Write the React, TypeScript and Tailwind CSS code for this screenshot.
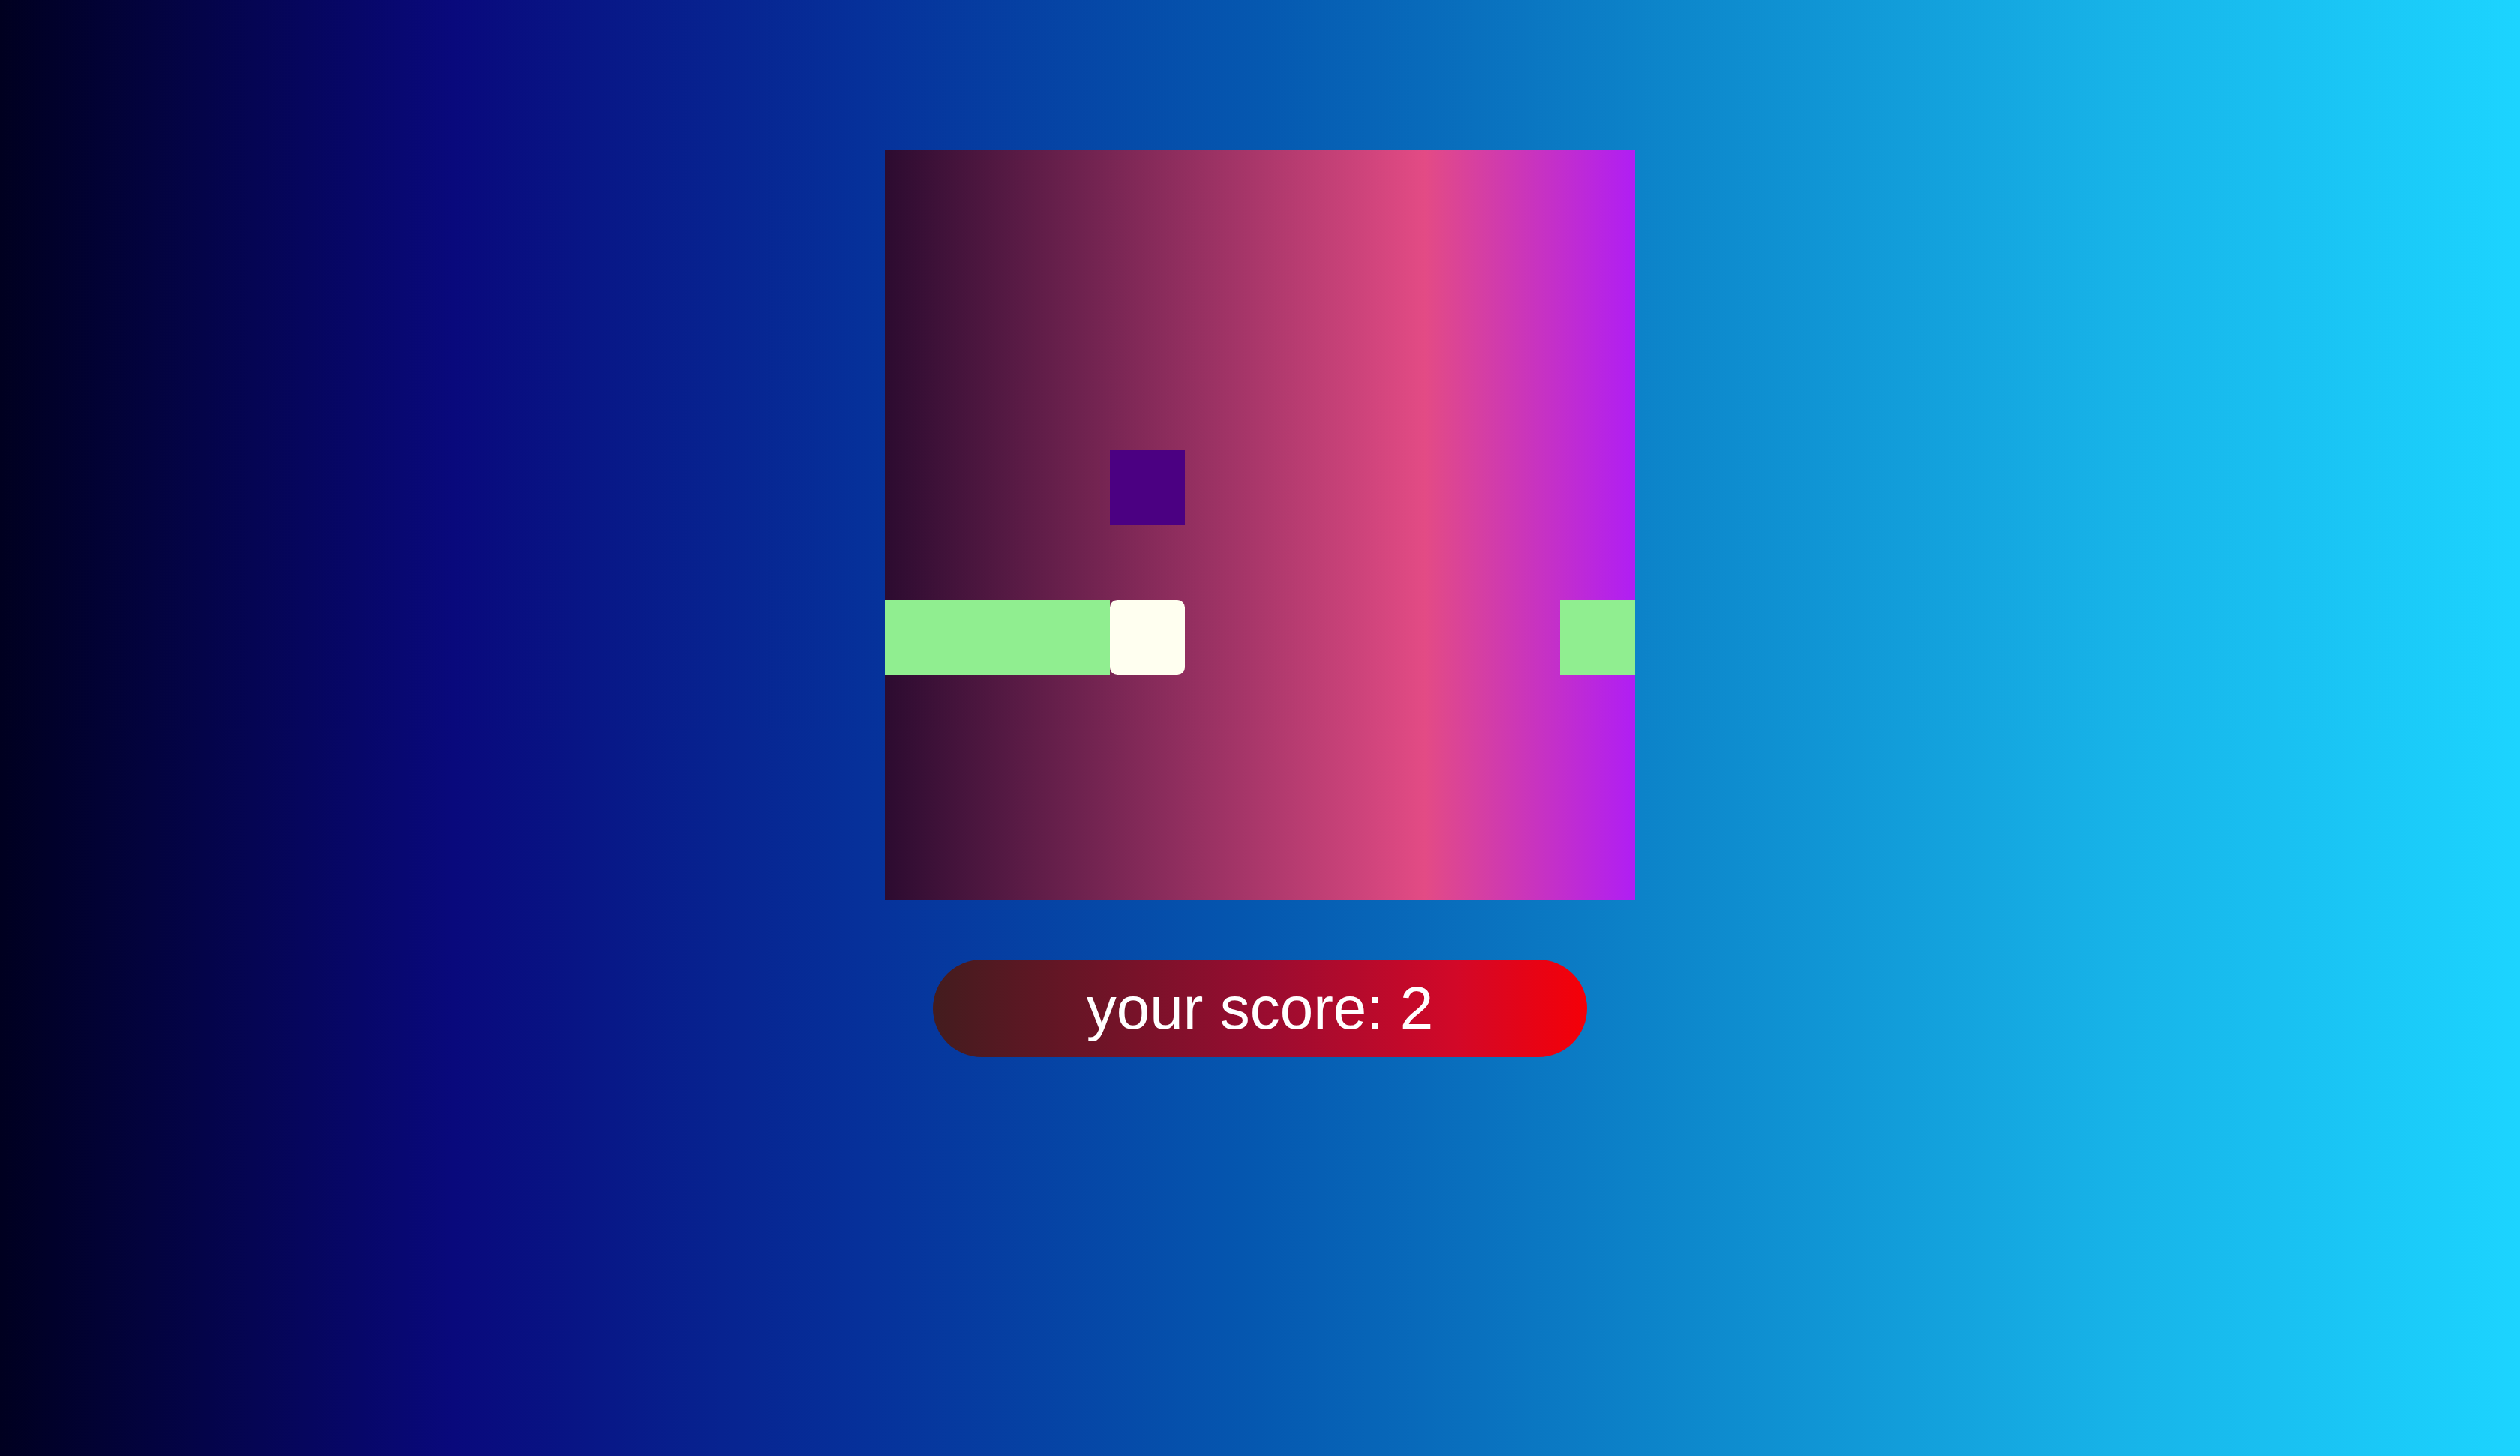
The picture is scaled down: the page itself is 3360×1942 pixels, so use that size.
type Cell = "empty" | "body" | "head" | "food";

const SIZE = 10;

const snake: [number, number][] = [
  [6, 3],
  [6, 2],
  [6, 1],
  [6, 0],
  [6, 9],
];
const food: [number, number] = [4, 3];

const cellAt = (r: number, c: number): Cell => {
  if (snake[0][0] === r && snake[0][1] === c) return "head";
  if (snake.some(([sr, sc]) => sr === r && sc === c)) return "body";
  if (food[0] === r && food[1] === c) return "food";
  return "empty";
};

const cellClass: Record<Cell, string> = {
  empty: "",
  body: "bg-[#90ee90]",
  head: "bg-[#fffff0] rounded-[10px]",
  food: "bg-[#4b0082]",
};

export default function App() {
  return (
    <div className="h-screen w-full overflow-hidden flex flex-col items-center pt-[200px] bg-[linear-gradient(to_right,#000020_0%,#09097c_18%,#06309a_34%,#0558b0_50%,#0d88cc_67%,#17b3e8_84%,#1cd4ff_100%)] font-['Liberation_Sans',Arial,sans-serif]">
      <div className="w-[1000px] h-[1000px] shrink-0 grid grid-cols-10 grid-rows-10 bg-[linear-gradient(to_right,#2c0b30_0%,#e34b85_72%,#b01ef4_100%)]">
        {Array.from({ length: SIZE * SIZE }, (_, i) => {
          const r = Math.floor(i / SIZE);
          const c = i % SIZE;
          const kind = cellAt(r, c);
          return <div key={i} className={cellClass[kind]} />;
        })}
      </div>

      <div className="mt-[80px] w-[872px] h-[130px] shrink-0 rounded-full flex items-center justify-center bg-[linear-gradient(to_right,#431c1e_0%,#980c30_50%,#d20828_80%,#f50008_100%)]">
        <span className="text-white text-[80px] leading-none">your score: 2</span>
      </div>
    </div>
  );
}
